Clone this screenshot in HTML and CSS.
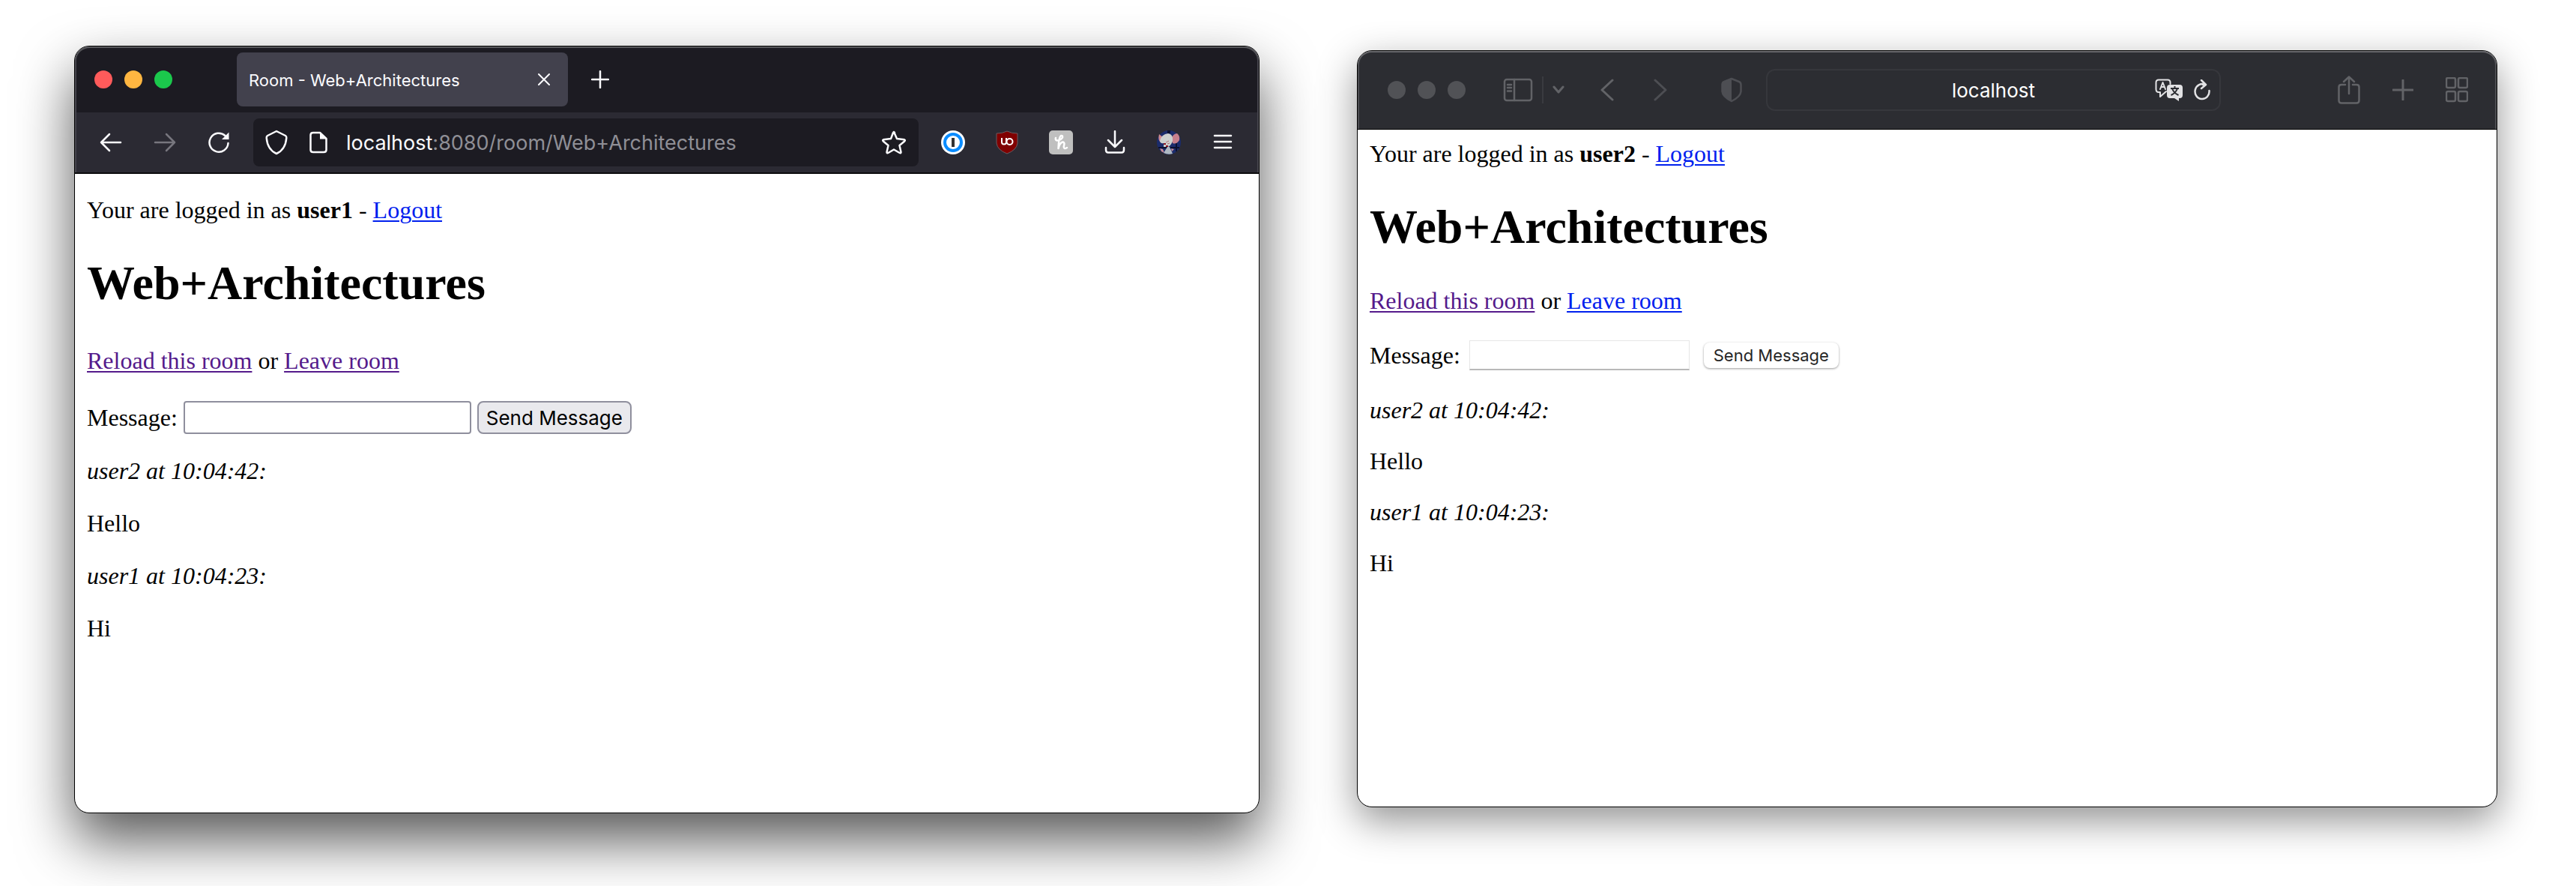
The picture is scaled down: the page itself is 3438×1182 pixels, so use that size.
FILE: index.html
```html
<!DOCTYPE html>
<html lang="en">
<head>
<meta charset="utf-8">
<title>Room - Web+Architectures</title>
<link rel="stylesheet" href="styles.css">
</head>
<body>
<main class="desktop">
  <section class="window window-front" aria-label="Firefox window">
    <div class="chrome firefox-chrome">
      <div class="tab-bar">
        <div class="lights"><span class="light red"></span><span class="light amber"></span><span class="light green"></span></div>
        <div class="tab">
          <span class="tab-title">Room - Web+Architectures</span>
          <button class="icon-button" type="button" aria-label="Close tab"><svg width="16" height="16" viewBox="0 0 16 16"><path d="M1 1L15 15M15 1L1 15" class="line thin"/></svg></button>
        </div>
        <button class="icon-button new-tab" type="button" aria-label="New tab"><svg width="24" height="24" viewBox="0 0 24 24"><path d="M12 1V23M1 12H23" class="line"/></svg></button>
      </div>
      <div class="nav-bar">
        <div class="nav-buttons">
          <button class="icon-button" type="button" aria-label="Back"><svg width="30" height="26" viewBox="0 0 30 26"><path d="M28 13H2M13 2L2 13L13 24" class="line"/></svg></button>
          <button class="icon-button dim" type="button" aria-label="Forward"><svg width="30" height="26" viewBox="0 0 30 26"><path d="M2 13H28M17 2L28 13L17 24" class="line"/></svg></button>
          <button class="icon-button" type="button" aria-label="Reload"><svg width="30" height="30" viewBox="0 0 30 30"><path d="M27.500 16A12.500 12.500 0 1 1 23.500 6L25 8" class="line"/><path d="M28.500 1.500V11H19Z" class="solid"/></svg></button>
        </div>
        <div class="address">
          <svg width="30" height="34" viewBox="0 0 30 34"><path d="M15 2L27 8Q28.500 9 28.300 11C27.500 21 24 28 15 32C6 28 2.500 21 1.700 11Q1.500 9 3 8Z" class="line"/></svg>
          <svg class="page-icon" width="24" height="30" viewBox="0 0 24 30"><path d="M14 2H5Q1.500 2 1.500 5V25Q1.500 28 5 28H19Q22.500 28 22.500 25V10Z" class="line"/><path d="M14 1V10.500H23.500Z" class="solid"/></svg>
          <span class="url"><b class="host">localhost</b>:8080/room/Web+Architectures</span>
          <button class="icon-button" type="button" aria-label="Bookmark this page"><svg width="34" height="32" viewBox="0 0 34 32"><path d="M17 2L21 11L31 12.300Q32.500 13 31.400 14.200L24.500 20L26.500 29Q26.300 30.800 24.700 30L17 25.500L9.300 30Q7.700 30.800 7.500 29L9.500 20L2.600 14.200Q1.500 13 3 12.300L13 11L16 3Q17 1 18 3" class="line"/></svg></button>
        </div>
        <div class="extensions">
          <button class="icon-button" type="button" aria-label="1Password"><svg width="32" height="32" viewBox="0 0 32 32"><circle cx="16" cy="16" r="16" fill="#fff"/><circle cx="16" cy="16" r="11" fill="#fff" stroke="#0a8cff" stroke-width="4"/><rect x="14" y="10" width="4" height="12" fill="#333"/></svg></button>
          <button class="icon-button" type="button" aria-label="uBlock Origin"><svg width="32" height="32" viewBox="0 0 32 32"><path d="M16 1Q22 4 30 4V17Q29 26 16 31Q3 26 2 17V4Q10 4 16 1Z" fill="#800000" stroke="#6b5a60" stroke-width="1"/><path d="M9 10V15.500Q9 18.500 12 18.500Q15 18.500 15 15.500V10" fill="none" stroke="#fff" stroke-width="2"/><circle cx="19.500" cy="15" r="4" fill="none" stroke="#fff" stroke-width="2"/></svg></button>
          <button class="icon-button" type="button" aria-label="Honey"><svg width="32" height="32" viewBox="0 0 32 32"><rect width="32" height="32" rx="5" fill="#bfbfbf"/><path d="M9 10Q8 13 11 13.500Q16 13 18 9.500Q18.500 6.500 16 7Q13 9 12.500 24Q14 17 18 15.500Q21 15.500 20.300 19L19.700 22Q20 25.500 24 23" fill="none" stroke="#fff" stroke-width="2.500" stroke-linecap="round" stroke-linejoin="round"/></svg></button>
          <button class="icon-button" type="button" aria-label="Downloads"><svg width="32" height="32" viewBox="0 0 32 32"><path d="M16 1V21M7 13L16 22L25 13M4 23V26Q4 29.500 7 29.500H25Q28 29.500 28 26V23" class="line"/></svg></button>
          <button class="icon-button" type="button" aria-label="Profile"><svg width="32" height="32" viewBox="0 0 32 32"><circle cx="16" cy="16" r="16" fill="#1b2c6c"/><path d="M14 0H18V4H14ZM2 22H30V24H2ZM25 17H27V28H25Z" fill="#0b1030"/><path d="M19 11Q22 4 27 4Q31 7 30 13Q26 19 21 17Z" fill="#c77f8c"/><path d="M3 5L8 9L5 16Q1 13 3 5Z" fill="#d08a90"/><path d="M4 14Q6 5 15 4Q22 5 21 14Q19 20 15 22H9L9 17Q5 18 4 14Z" fill="#ccd0cf"/><path d="M9 18H12M12 21H15" stroke="#8b1622" stroke-width="2"/><path d="M12 16L16 14M14 18L17 17" stroke="#b07078" stroke-width="1"/><path d="M14 22L17 22L21 31Q15 33 9 30Z" fill="#aeb8c2"/><path d="M4 24L8 25L10 30L6 28ZM19 24L23 25L20 28Z" fill="#c98c96"/></svg></button>
          <button class="icon-button" type="button" aria-label="Open menu"><svg width="32" height="32" viewBox="0 0 32 32"><path d="M5 7H27M5 15H27M5 23H27" class="line"/></svg></button>
        </div>
      </div>
    </div>
    <div class="page firefox-page">
      <p>Your are logged in as <b>user1</b> - <a href="#logout">Logout</a></p>
      <h1>Web+Architectures</h1>
      <p><a class="visited" href="#room">Reload this room</a> or <a class="visited" href="#leave">Leave room</a></p>
      <form class="message-form"><label for="message-1">Message:</label><input id="message-1" type="text"><button type="button">Send Message</button></form>
      <p><i>user2 at 10:04:42:</i></p>
      <p>Hello</p>
      <p><i>user1 at 10:04:23:</i></p>
      <p>Hi</p>
    </div>
  </section>

  <section class="window window-back" aria-label="Safari window">
    <div class="chrome safari-chrome">
      <div class="safari-left">
        <div class="lights"><span class="light"></span><span class="light"></span><span class="light"></span></div>
        <div class="sidebar-tools">
          <button class="icon-button" type="button" aria-label="Show sidebar"><svg width="40" height="32" viewBox="0 0 40 32"><rect x="2" y="2" width="36" height="28" rx="3" class="line"/><path d="M15 2V30M6 9H11M6 13H11M6 17.500H11" class="line"/></svg></button>
          <span class="divider"></span>
          <button class="icon-button" type="button" aria-label="Tab groups"><svg width="16" height="12" viewBox="0 0 16 12"><path d="M2 2L8 9L14 2" class="line bold"/></svg></button>
        </div>
        <div class="history">
          <button class="icon-button" type="button" aria-label="Back"><svg width="18" height="30" viewBox="0 0 18 30"><path d="M16 2L2 15L16 28" class="line bold"/></svg></button>
          <button class="icon-button faint" type="button" aria-label="Forward"><svg width="18" height="30" viewBox="0 0 18 30"><path d="M2 2L16 15L2 28" class="line bold"/></svg></button>
        </div>
        <button class="icon-button faint" type="button" aria-label="Privacy report"><svg width="28" height="34" viewBox="0 0 28 34"><path d="M14 2L24 6Q26.500 7 26.500 10V19Q26 26 14 32Q2 26 1.500 19V10Q1.500 7 4 6Z" class="line"/><path d="M14 1V33Q1 26 1 19V9Q1 6 4 5Z" class="solid"/></svg></button>
      </div>
      <div class="safari-address">
        <span class="safari-url">localhost</span>
        <div class="address-tools">
          <button class="icon-button" type="button" aria-label="Translate"><svg width="38" height="30" viewBox="0 0 38 30"><path d="M15 17L7 24V18H5Q1.500 18 1.500 14V5Q1.500 1.500 5 1.500H17Q20.500 1.500 20.500 5V7" class="line thin"/><path d="M7 14L10.500 5L14 14M8.500 11H12.500" class="line thin"/><path d="M20 8H33Q37 8 37 12V22Q37 26 33 26H32V30L26 26H20Q16 26 16 22V12Q16 8 20 8Z" class="solid"/><path d="M21 13H32M26.500 10V13M30 13Q28 19 21.500 22M23 13Q25 19 31.500 22" fill="none" stroke="#2c2d32" stroke-width="2"/></svg></button>
          <button class="icon-button" type="button" aria-label="Reload page"><svg width="22" height="28" viewBox="0 0 22 28"><path d="M20.500 15A9.500 10 0 1 1 15 7H12M10 1L16 7L10 12" class="line"/></svg></button>
        </div>
      </div>
      <div class="safari-right">
        <button class="icon-button" type="button" aria-label="Share"><svg width="30" height="38" viewBox="0 0 30 38"><path d="M10 12H5Q1.500 12 1.500 15V33Q1.500 36.500 5 36.500H25Q28.500 36.500 28.500 33V15Q28.500 12 25 12H20M15 24V2M8 8L15 1.500L22 8" class="line"/></svg></button>
        <button class="icon-button" type="button" aria-label="New tab"><svg width="28" height="28" viewBox="0 0 28 28"><path d="M14 1V27M1 14H27" class="line bold"/></svg></button>
        <button class="icon-button" type="button" aria-label="Tab overview"><svg width="30" height="34" viewBox="0 0 30 34"><g class="line"><rect x="1" y="1" width="12" height="13" rx="2"/><rect x="17" y="1" width="12" height="13" rx="2"/><rect x="1" y="19" width="12" height="13" rx="2"/><rect x="17" y="19" width="12" height="13" rx="2"/></g></svg></button>
      </div>
    </div>
    <div class="page safari-page">
      <p>Your are logged in as <b>user2</b> - <a href="#logout">Logout</a></p>
      <h1>Web+Architectures</h1>
      <p><a class="visited" href="#room">Reload this room</a> or <a href="#leave">Leave room</a></p>
      <form class="message-form"><label for="message-2">Message:</label><input id="message-2" type="text"><button type="button">Send Message</button></form>
      <p><i>user2 at 10:04:42:</i></p>
      <p>Hello</p>
      <p><i>user1 at 10:04:23:</i></p>
      <p>Hi</p>
    </div>
  </section>
</main>
</body>
</html>
```
FILE: styles.css
```css
* { box-sizing: border-box; }

body {
  margin: 0;
  background: #fff;
  color: #000;
  font-family: "Liberation Serif", "Times New Roman", serif;
}

.desktop {
  display: flex;
  align-items: flex-start;
  gap: 130px;
  padding: 61px 105px 97px 99px;
}

.window {
  min-width: 0;
  border: 1px solid #000;
  border-radius: 20px;
  background: #fff;
}

.window-front {
  flex: 1582 1 0;
  position: relative;
  box-shadow: 0 36px 74px rgba(0, 0, 0, 0.66);
}

.window-back {
  flex: 1522 1 0;
  margin-top: 6px;
  box-shadow: 0 18px 52px rgba(0, 0, 0, 0.43);
}

/* Browser chrome */

.chrome {
  border-radius: 19px 19px 0 0;
  font-family: Inter, "Liberation Sans", sans-serif;
}

.icon-button {
  display: flex;
  align-items: center;
  justify-content: center;
  padding: 0;
  border: 0;
  background: none;
  color: inherit;
}

svg { display: block; flex: none; }

.line {
  fill: none;
  stroke: currentColor;
  stroke-width: 2.5;
  stroke-linecap: round;
  stroke-linejoin: round;
}

.line.thin { stroke-width: 2; }
.line.bold { stroke-width: 3; }
.solid { fill: currentColor; }

.lights { display: flex; gap: 16px; }

.light {
  width: 24px;
  height: 24px;
  border-radius: 50%;
  background: #515256;
}

.light.red { background: #ff5b5b; }
.light.amber { background: #ffb641; }
.light.green { background: #1bc84c; }

.firefox-chrome {
  background: #2b2a33;
  border-bottom: 2px solid #0c0c0d;
  color: #fbfbfe;
  box-shadow: inset 0 2px 0 #57575b, inset 2px 0 0 #46454d, inset -2px 0 0 #46454d;
}

.tab-bar {
  display: flex;
  align-items: center;
  height: 88px;
  margin: 0 2px;
  padding: 0 0 2px 24px;
  border-top: 2px solid #57575b;
  border-radius: 18px 18px 0 0;
  background: #1c1b22;
}

.tab {
  display: flex;
  align-items: center;
  justify-content: space-between;
  width: 442px;
  height: 72px;
  margin-left: 86px;
  padding: 0 24px 0 16px;
  border-radius: 8px;
  background: #42414d;
}

.tab-title { font-size: 22px; line-height: 28px; padding-top: 2px; }

.new-tab { margin-left: 31px; }

.nav-bar {
  display: flex;
  align-items: center;
  height: 80px;
  padding: 0 32px 0 33px;
}

.nav-buttons { display: flex; align-items: center; gap: 42px; }

.dim { color: #77767e; }

.address {
  flex: 1;
  display: flex;
  align-items: center;
  height: 64px;
  margin: 0 30px 0 31px;
  padding: 0 16px;
  border-radius: 8px;
  background: #1c1b22;
}

.page-icon { margin: 0 25px 0 29px; }

.url { flex: 1; color: #8f8f96; font-size: 27px; }

.host { color: #fbfbfe; font-weight: 400; }

.extensions { display: flex; align-items: center; gap: 40px; }

.safari-chrome {
  display: flex;
  align-items: center;
  height: 105px;
  padding: 0 38px 0 40px;
  border-bottom: 1px solid #000;
  background: #2c2d32;
  color: #626367;
  box-shadow: inset 0 2px 0 #68686c, inset 2px 0 0 #4c4d51, inset -2px 0 0 #4c4d51;
}

.safari-left, .safari-right, .sidebar-tools, .history, .address-tools {
  display: flex;
  align-items: center;
}

.sidebar-tools { gap: 12px; margin-left: 50px; }

.divider { width: 2px; height: 36px; background: #3a3b40; }

.history { gap: 53px; margin: 0 72px 0 48px; }

.faint { color: #4d4e53; }

.safari-address {
  flex: 1;
  display: flex;
  align-items: center;
  height: 56px;
  margin: 0 156px 0 32px;
  padding: 0 12px;
  border: 2px solid #36373c;
  border-radius: 12px;
  color: #e2e2e4;
}

.safari-url {
  flex: 1;
  padding-left: 74px;
  color: #fff;
  font-size: 26px;
  text-align: center;
}

.address-tools { gap: 14px; }

.safari-right { gap: 43px; }

/* Chat room page */

.page {
  padding: 0 16px;
  font-size: 32px;
}

.page p { margin: 0 0 32px; }

.page h1 { font-size: 64px; }

.page a { color: #0020ee; text-decoration-thickness: 2px; text-underline-offset: 3px; }

.page a.visited { color: #551a8b; }

.message-form { display: flex; align-items: center; }

.firefox-page { padding-top: 29px; padding-bottom: 195px; line-height: 38px; }
.firefox-page h1 { margin: 41px 0 46px; line-height: 76px; }
.firefox-page .message-form { margin: 35px 0 30px; }

.firefox-page input {
  width: 384px;
  height: 44px;
  margin: 0 8px;
  border: 2px solid #8f8f9d;
  border-radius: 4px;
}

.firefox-page button {
  width: 206px;
  height: 44px;
  padding: 0;
  border: 2px solid #8f8f9d;
  border-radius: 8px;
  background: #e9e9ed;
  color: #000;
  font: 26px Inter, "Liberation Sans", sans-serif;
}

.safari-page { padding-top: 14px; padding-bottom: 275px; line-height: 36px; }
.safari-page h1 { margin: 43px 0; line-height: 74px; }
.safari-page .message-form { margin: 35px 0; }

.safari-page input {
  width: 294px;
  height: 40px;
  margin: 0 19px 0 12px;
  border: 1px solid #e6e6e6;
  border-bottom: 2px solid #b9b9b9;
}

.safari-page button {
  width: 180px;
  height: 34px;
  padding: 0;
  border: 0;
  border-radius: 8px;
  background: #fff;
  box-shadow: 0 1px 3px rgba(0, 0, 0, 0.4);
  color: #262626;
  font: 22px Inter, "Liberation Sans", sans-serif;
}
```
